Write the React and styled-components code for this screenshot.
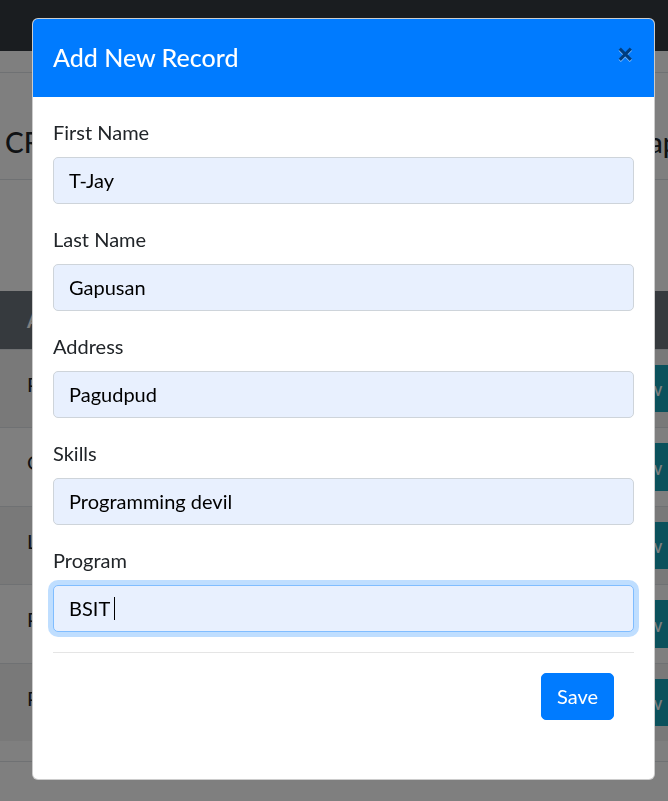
import React from "react";
import styled, { createGlobalStyle } from "styled-components";

const GlobalStyle = createGlobalStyle`
  *, *::before, *::after { box-sizing: border-box; }
  html, body { margin: 0; padding: 0; overflow: hidden; }
  body {
    font-family: Lato, "Noto Sans", Arial, sans-serif;
    font-size: 20px;
    line-height: 1.5;
    color: #212529;
    background: #fff;
  }
`;

/* ---------- page behind the modal ---------- */
const Page = styled.div`
  width: 800px;
  min-height: 801px;
`;

const Navbar = styled.nav`
  height: 51px;
  background: #343a40;
`;

const SubBar = styled.div`
  height: 22px;
  border-bottom: 1px solid #dee2e6;
`;

const HeadingRow = styled.div`
  height: 107px;
  padding: 52px 64px 0 5px;
  display: flex;
  justify-content: space-between;
  align-items: flex-start;
  border-bottom: 1px solid #dee2e6;
`;

const PageTitle = styled.h3`
  margin: 0;
  font-size: 28px;
  line-height: 34px;
  font-weight: 500;
  color: #212529;
`;

const Table = styled.table`
  margin-top: 111px;
  width: 800px;
  border-collapse: collapse;
  table-layout: fixed;
`;

const HeadCell = styled.th`
  height: 58px;
  padding: 0 15px 0 ${(p) => (p.$first ? "27px" : "15px")};
  text-align: ${(p) => (p.$end ? "right" : "left")};
  font-weight: 700;
  color: #fff;
  background: #6c757d;
  white-space: nowrap;
  overflow: hidden;
`;

const Row = styled.tr`
  background: ${(p) => (p.$striped ? "rgba(0,0,0,0.05)" : "transparent")};
  border-top: 1px solid #dee2e6;
`;

const Cell = styled.td`
  padding: ${(p) => (p.$text ? "19px" : "15px")} 15px 15px
    ${(p) => (p.$first ? "27px" : "15px")};
  vertical-align: top;
  white-space: nowrap;
  overflow: hidden;
`;

const ActionGroup = styled.div`
  display: flex;
  gap: 8px;
`;

const SmallButton = styled.button`
  height: 47.5px;
  padding: 0 15px;
  border: 1px solid ${(p) => p.$bg};
  border-radius: 5px;
  background: ${(p) => p.$bg};
  color: #fff;
  font: inherit;
  line-height: 30px;
`;

const TableEnd = styled.div`
  height: 21px;
  border-bottom: 1px solid #dee2e6;
`;

/* ---------- modal ---------- */
const Backdrop = styled.div`
  position: fixed;
  inset: 0;
  background: rgba(0, 0, 0, 0.5);
`;

const ModalLayer = styled.div`
  position: fixed;
  inset: 0;
  padding: 18px 0 0 32px;
`;

const ModalContent = styled.div`
  width: 623px;
  background: #fff;
  border: 1px solid rgba(0, 0, 0, 0.2);
  border-radius: 6px;
  overflow: hidden;
`;

const ModalHeader = styled.div`
  display: flex;
  align-items: flex-start;
  padding: 20px;
  background: #007bff;
`;

const ModalTitle = styled.h5`
  margin: 0;
  font-size: 25px;
  line-height: 1.5;
  font-weight: 500;
  color: #fff;
`;

const CloseButton = styled.button`
  margin: -20px -20px -20px auto;
  padding: 20px;
  border: 0;
  background: transparent;
  font-family: "Noto Sans", sans-serif;
  font-size: 30px;
  font-weight: 700;
  line-height: 1;
  color: #000;
  opacity: 0.5;
  text-shadow: 0 1px 0 #fff;
`;

const ModalBody = styled.div`
  padding: 20px 20px 59px;
`;

const FormGroup = styled.div`
  margin-bottom: 20px;
`;

const Label = styled.label`
  display: inline-block;
  margin-bottom: 10px;
  line-height: 30px;
`;

const Field = styled.div`
  display: flex;
  align-items: center;
  height: 47px;
  padding: 0 15px;
  background: #e8f0fe;
  border: 1px solid ${(p) => (p.$focused ? "#80bdff" : "#ced4da")};
  border-radius: 5px;
  box-shadow: ${(p) => (p.$focused ? "0 0 0 5px rgba(0,123,255,0.25)" : "none")};
  color: #000;
  line-height: 30px;
`;

const Caret = styled.span`
  display: inline-block;
  width: 1px;
  height: 23px;
  margin-left: 4px;
  background: #000;
`;

const Divider = styled.hr`
  margin: 0 0 20px;
  border: 0;
  border-top: 1px solid rgba(0, 0, 0, 0.1);
`;

const ButtonRow = styled.div`
  display: flex;
  justify-content: flex-end;
  padding-right: 20px;
`;

const PrimaryButton = styled.button`
  height: 47px;
  padding: 0 15px;
  border: 1px solid #007bff;
  border-radius: 5px;
  background: #007bff;
  color: #fff;
  font: inherit;
  line-height: 30px;
`;

const fields = [
  { label: "First Name", value: "T-Jay" },
  { label: "Last Name", value: "Gapusan" },
  { label: "Address", value: "Pagudpud" },
  { label: "Skills", value: "Programming devil" },
  { label: "Program", value: "BSIT", focused: true },
];

const records = [
  ["Pagudpud", "Juan", "Dela Cruz", "Web design", "BSIT"],
  ["Claveria", "Maria", "Santos", "Networking", "BSCS"],
  ["Laoag", "Pedro", "Reyes", "Databases", "BSIT"],
  ["Pasuquin", "Ana", "Garcia", "Graphics", "BSIS"],
  ["Piddig", "Jose", "Ramos", "Java", "BSIT"],
];

export default function App() {
  return (
    <>
      <GlobalStyle />
      <Page>
        <Navbar />
        <SubBar />
        <HeadingRow>
          <PageTitle>CRUD Records</PageTitle>
          <PageTitle>Gapusan</PageTitle>
        </HeadingRow>
        <Table>
          <colgroup>
            <col style={{ width: 150 }} />
            <col style={{ width: 130 }} />
            <col style={{ width: 130 }} />
            <col style={{ width: 90 }} />
            <col style={{ width: 87 }} />
            <col style={{ width: 213 }} />
          </colgroup>
          <thead>
            <tr>
              <HeadCell $first>Address</HeadCell>
              <HeadCell>First Name</HeadCell>
              <HeadCell>Last Name</HeadCell>
              <HeadCell>Skills</HeadCell>
              <HeadCell>Program</HeadCell>
              <HeadCell $end>Actions</HeadCell>
            </tr>
          </thead>
          <tbody>
            {records.map((r, i) => (
              <Row key={i} $striped={i % 2 === 0}>
                {r.map((c, j) => (
                  <Cell key={j} $first={j === 0} $text>
                    {c}
                  </Cell>
                ))}
                <Cell>
                  <ActionGroup>
                    <SmallButton $bg="#17a2b8">View</SmallButton>
                    <SmallButton $bg="#ffc107">Edit</SmallButton>
                    <SmallButton $bg="#dc3545">Delete</SmallButton>
                  </ActionGroup>
                </Cell>
              </Row>
            ))}
          </tbody>
        </Table>
        <TableEnd />
      </Page>

      <Backdrop />
      <ModalLayer>
        <ModalContent>
          <ModalHeader>
            <ModalTitle>Add New Record</ModalTitle>
            <CloseButton type="button" aria-label="Close">×</CloseButton>
          </ModalHeader>
          <ModalBody>
            {fields.map((f) => (
              <FormGroup key={f.label}>
                <Label>{f.label}</Label>
                <Field $focused={f.focused}>
                  <span>{f.value}</span>
                  {f.focused && <Caret />}
                </Field>
              </FormGroup>
            ))}
            <Divider />
            <ButtonRow>
              <PrimaryButton type="button">Save</PrimaryButton>
            </ButtonRow>
          </ModalBody>
        </ModalContent>
      </ModalLayer>
    </>
  );
}
